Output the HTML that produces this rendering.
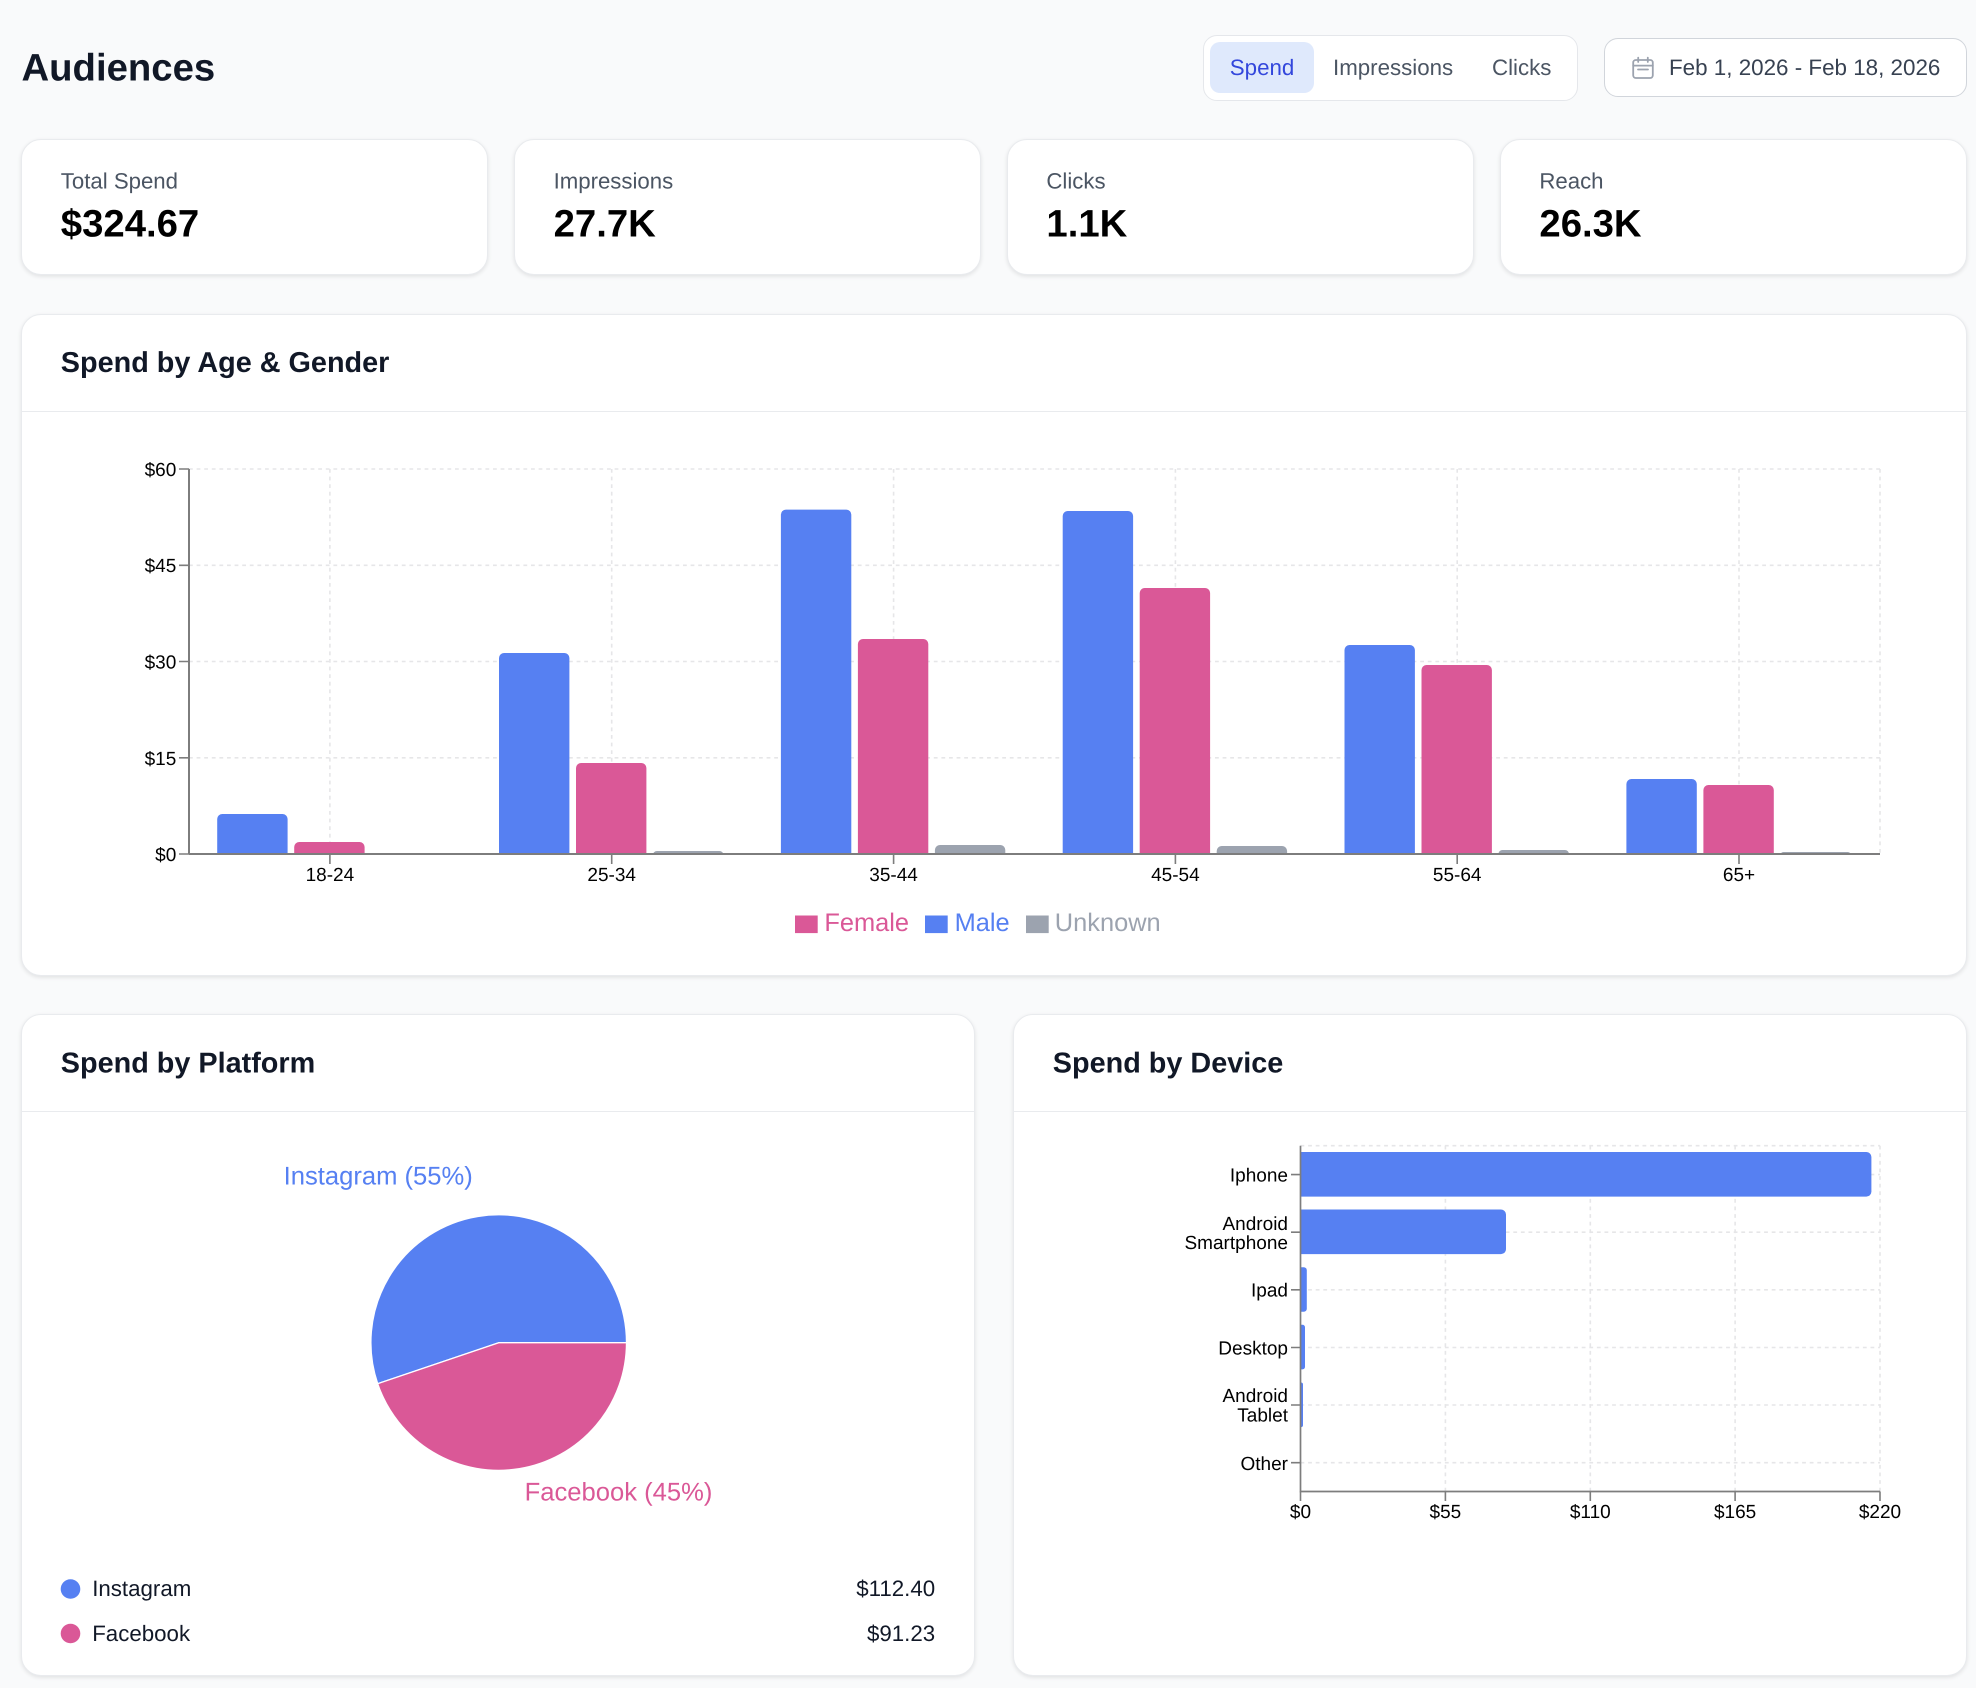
<!DOCTYPE html>
<html lang="en">
<head>
<meta charset="utf-8">
<title>Audiences</title>
<style>
html,body{margin:0;padding:0;background:#f9fafb;}
body{width:1976px;height:1688px;position:relative;overflow:hidden;font-family:"Liberation Sans",Arial,sans-serif;}
.c{position:absolute;box-sizing:border-box;background:#fff;border:1.3px solid #e9ebee;border-radius:20px;box-shadow:0 1.5px 4px rgba(0,0,0,.10);}
.t{position:absolute;box-sizing:border-box;background:#fff;border:1.3px solid #e5e7eb;border-radius:14px;}
.a{position:absolute;background:#dfe9fc;border-radius:10px;}
.d{position:absolute;box-sizing:border-box;background:#fff;border:1.3px solid #d1d5db;border-radius:14px;}
.h{position:absolute;height:1.3px;background:#e9ebee;}
svg{position:absolute;left:0;top:0;}
text{font-family:"Liberation Sans",Arial,sans-serif;text-rendering:geometricPrecision;}
.lab{font-size:22.2px;fill:#4b5563;}
.val{font-size:38.3px;font-weight:700;fill:#000;}
.ttl{font-size:28.8px;font-weight:700;fill:#111827;}
.ax{font-size:19px;fill:#000;}
.gr{stroke:#e6e6e8;stroke-width:1.6;stroke-dasharray:3.8 3.8;fill:none;}
.axl{stroke:#7d7d7d;stroke-width:2;fill:none;}
.bl{fill:#5680f2;}
.pk{fill:#da5897;}
.gy{fill:#9ca3af;}
</style>
</head>
<body>
<div class="t" style="left:1203px;top:35px;width:374.5px;height:65.5px"></div>
<div class="a" style="left:1210px;top:42px;width:104px;height:51px"></div>
<div class="d" style="left:1604px;top:38px;width:362.5px;height:59px"></div>

<div class="c" style="left:21.4px;top:139.4px;width:466.2px;height:136px"></div>
<div class="c" style="left:514.4px;top:139.4px;width:466.2px;height:136px"></div>
<div class="c" style="left:1007.4px;top:139.4px;width:466.2px;height:136px"></div>
<div class="c" style="left:1500.4px;top:139.4px;width:466.2px;height:136px"></div>

<div class="c" style="left:21.4px;top:314.4px;width:1945.2px;height:661.5px"></div>
<div class="h" style="left:22px;top:411px;width:1944px"></div>

<div class="c" style="left:21.4px;top:1013.9px;width:953.2px;height:661.8px"></div>
<div class="h" style="left:22px;top:1111px;width:952px"></div>

<div class="c" style="left:1013.4px;top:1013.9px;width:953.2px;height:661.8px"></div>
<div class="h" style="left:1014px;top:1111px;width:952px"></div>

<svg width="1976" height="1688" viewBox="0 0 1976 1688" xmlns="http://www.w3.org/2000/svg">
<defs>
<clipPath id="c1"><rect x="180" y="440" width="1720" height="414"/></clipPath>
<clipPath id="c2"><rect x="1300.5" y="1140" width="600" height="360"/></clipPath>
</defs>

<!-- Header -->
<text x="21.5" y="80.5" font-size="38.3" font-weight="700" fill="#111827">Audiences</text>
<text x="1229.8" y="75" font-size="22.3" fill="#3347dc">Spend</text>
<text x="1333" y="75" font-size="22.3" fill="#4b5563">Impressions</text>
<text x="1492" y="75" font-size="22.3" fill="#4b5563">Clicks</text>
<g fill="none" stroke="#9ca3af" stroke-width="1.8" stroke-linecap="round" stroke-linejoin="round">
<rect x="1633.2" y="60" width="19.6" height="18" rx="2.6"/>
<path d="M1638.2 57.6V62M1647.8 57.6V62M1633.2 65.6H1652.8M1638 69.5H1648"/>
</g>
<text x="1669" y="75" font-size="22.4" fill="#374151">Feb 1, 2026 - Feb 18, 2026</text>

<!-- Stat cards -->
<text class="lab" x="60.8" y="188.5">Total Spend</text>
<text class="val" x="60.8" y="236.5">$324.67</text>
<text class="lab" x="553.6" y="188.5">Impressions</text>
<text class="val" x="553.6" y="236.5">27.7K</text>
<text class="lab" x="1046.4" y="188.5">Clicks</text>
<text class="val" x="1046.4" y="236.5">1.1K</text>
<text class="lab" x="1539.4" y="188.5">Reach</text>
<text class="val" x="1539.4" y="236.5">26.3K</text>

<!-- Titles -->
<text class="ttl" x="60.8" y="372">Spend by Age &amp; Gender</text>
<text class="ttl" x="60.8" y="1072.3">Spend by Platform</text>
<text class="ttl" x="1052.8" y="1072.3">Spend by Device</text>

<!-- Chart 1 grid -->
<path class="gr" d="M189 469H1880M189 565.3H1880M189 661.5H1880M189 757.8H1880"/>
<path class="gr" d="M329.9 469V854M611.7 469V854M893.6 469V854M1175.4 469V854M1457.2 469V854M1739 469V854M1880 469V854"/>

<!-- Chart 1 bars -->
<g clip-path="url(#c1)">
<rect class="bl" x="217.2" y="814" width="70.4" height="60" rx="5"/>
<rect class="pk" x="294.2" y="842" width="70.4" height="40" rx="5"/>
<rect class="bl" x="499" y="653" width="70.4" height="220" rx="5"/>
<rect class="pk" x="576" y="763" width="70.4" height="110" rx="5"/>
<rect class="gy" x="653" y="851" width="70.4" height="20" rx="4"/>
<rect class="bl" x="780.9" y="509.6" width="70.4" height="360" rx="5"/>
<rect class="pk" x="857.9" y="639" width="70.4" height="230" rx="5"/>
<rect class="gy" x="934.9" y="845" width="70.4" height="30" rx="5"/>
<rect class="bl" x="1062.7" y="511" width="70.4" height="360" rx="5"/>
<rect class="pk" x="1139.7" y="588" width="70.4" height="280" rx="5"/>
<rect class="gy" x="1216.7" y="846" width="70.4" height="30" rx="5"/>
<rect class="bl" x="1344.5" y="645" width="70.4" height="230" rx="5"/>
<rect class="pk" x="1421.5" y="665" width="70.4" height="210" rx="5"/>
<rect class="gy" x="1498.5" y="850" width="70.4" height="20" rx="4"/>
<rect class="bl" x="1626.4" y="779" width="70.4" height="90" rx="5"/>
<rect class="pk" x="1703.4" y="785" width="70.4" height="90" rx="5"/>
<rect class="gy" x="1780.4" y="852" width="70.4" height="20" rx="3"/>
</g>

<!-- Chart 1 axes -->
<path class="axl" d="M189 469V854M189 854H1880"/>
<path class="axl" style="stroke-width:1.6" d="M179 469H189M179 565.3H189M179 661.5H189M179 757.8H189M179 854H189"/>
<path class="axl" style="stroke-width:1.6" d="M329.9 854V864M611.7 854V864M893.6 854V864M1175.4 854V864M1457.2 854V864M1739 854V864"/>
<g text-anchor="end">
<text class="ax" x="176.3" y="476">$60</text>
<text class="ax" x="176.3" y="572">$45</text>
<text class="ax" x="176.3" y="668.5">$30</text>
<text class="ax" x="176.3" y="765">$15</text>
<text class="ax" x="176.3" y="861">$0</text>
</g>
<g text-anchor="middle">
<text class="ax" x="329.9" y="880.8">18-24</text>
<text class="ax" x="611.7" y="880.8">25-34</text>
<text class="ax" x="893.6" y="880.8">35-44</text>
<text class="ax" x="1175.4" y="880.8">45-54</text>
<text class="ax" x="1457.2" y="880.8">55-64</text>
<text class="ax" x="1739" y="880.8">65+</text>
</g>

<!-- Chart 1 legend -->
<rect class="pk" x="795" y="915.5" width="22.7" height="17.6"/>
<text x="824.4" y="931" font-size="25.4" fill="#da5897">Female</text>
<rect class="bl" x="925" y="915.5" width="22.7" height="17.6"/>
<text x="954.6" y="931" font-size="25.4" fill="#5680f2">Male</text>
<rect class="gy" x="1026" y="915.5" width="22.7" height="17.6"/>
<text x="1054.8" y="931" font-size="25.4" fill="#9ca3af">Unknown</text>

<!-- Pie -->
<path d="M498.7 1342.7L626.5 1342.7A127.8 127.8 0 1 0 377.7 1383.7Z" fill="#5680f2" stroke="#fff" stroke-width="1.3" stroke-linejoin="round"/>
<path d="M498.7 1342.7L377.7 1383.7A127.8 127.8 0 0 0 626.5 1342.7Z" fill="#da5897" stroke="#fff" stroke-width="1.3" stroke-linejoin="round"/>
<text x="283.6" y="1184.5" font-size="25.6" fill="#5680f2">Instagram (55%)</text>
<text x="524.6" y="1500.5" font-size="25.6" fill="#da5897">Facebook (45%)</text>

<!-- Platform legend -->
<circle cx="70.5" cy="1589" r="9.8" fill="#5680f2"/>
<text x="92.2" y="1596" font-size="22.3" fill="#111827">Instagram</text>
<text x="935.2" y="1596" font-size="22.3" fill="#111827" text-anchor="end">$112.40</text>
<circle cx="70.5" cy="1633.5" r="9.8" fill="#da5897"/>
<text x="92.2" y="1641" font-size="22.3" fill="#111827">Facebook</text>
<text x="935.2" y="1641" font-size="22.3" fill="#111827" text-anchor="end">$91.23</text>

<!-- Chart 3 grid -->
<path class="gr" d="M1300.5 1145.7H1880M1300.5 1174.6H1880M1300.5 1232.2H1880M1300.5 1289.8H1880M1300.5 1347.5H1880M1300.5 1405H1880M1300.5 1462.7H1880"/>
<path class="gr" d="M1445.4 1145.7V1491.5M1590.3 1145.7V1491.5M1735.1 1145.7V1491.5M1880 1145.7V1491.5"/>

<!-- Chart 3 bars -->
<g clip-path="url(#c2)">
<rect class="bl" x="1285" y="1152" width="586.4" height="44.6" rx="5"/>
<rect class="bl" x="1285" y="1209.5" width="221" height="44.6" rx="5"/>
<rect class="bl" x="1285" y="1267.2" width="21.8" height="44.6" rx="3"/>
<rect class="bl" x="1285" y="1324.8" width="20" height="44.6" rx="2.5"/>
<rect class="bl" x="1285" y="1382.5" width="18" height="44.6" rx="2"/>
</g>

<!-- Chart 3 axes -->
<path class="axl" style="stroke-width:1.7" d="M1300.5 1145.7V1491.5H1880"/>
<path class="axl" style="stroke-width:1.6" d="M1291 1174.6H1300.5M1291 1232.2H1300.5M1291 1289.8H1300.5M1291 1347.5H1300.5M1291 1405H1300.5M1291 1462.7H1300.5"/>
<path class="axl" style="stroke-width:1.6" d="M1300.5 1491.5V1501M1445.4 1491.5V1501M1590.3 1491.5V1501M1735.1 1491.5V1501M1880 1491.5V1501"/>
<g text-anchor="end">
<text class="ax" x="1288" y="1181.5">Iphone</text>
<text class="ax" x="1288" y="1230">Android</text>
<text class="ax" x="1288" y="1249">Smartphone</text>
<text class="ax" x="1288" y="1296.5">Ipad</text>
<text class="ax" x="1288" y="1354.5">Desktop</text>
<text class="ax" x="1288" y="1402">Android</text>
<text class="ax" x="1288" y="1421.5">Tablet</text>
<text class="ax" x="1288" y="1470">Other</text>
</g>
<g text-anchor="middle">
<text class="ax" x="1300.5" y="1517.8">$0</text>
<text class="ax" x="1445.4" y="1517.8">$55</text>
<text class="ax" x="1590.3" y="1517.8">$110</text>
<text class="ax" x="1735.1" y="1517.8">$165</text>
<text class="ax" x="1880" y="1517.8">$220</text>
</g>
</svg>
</body>
</html>
